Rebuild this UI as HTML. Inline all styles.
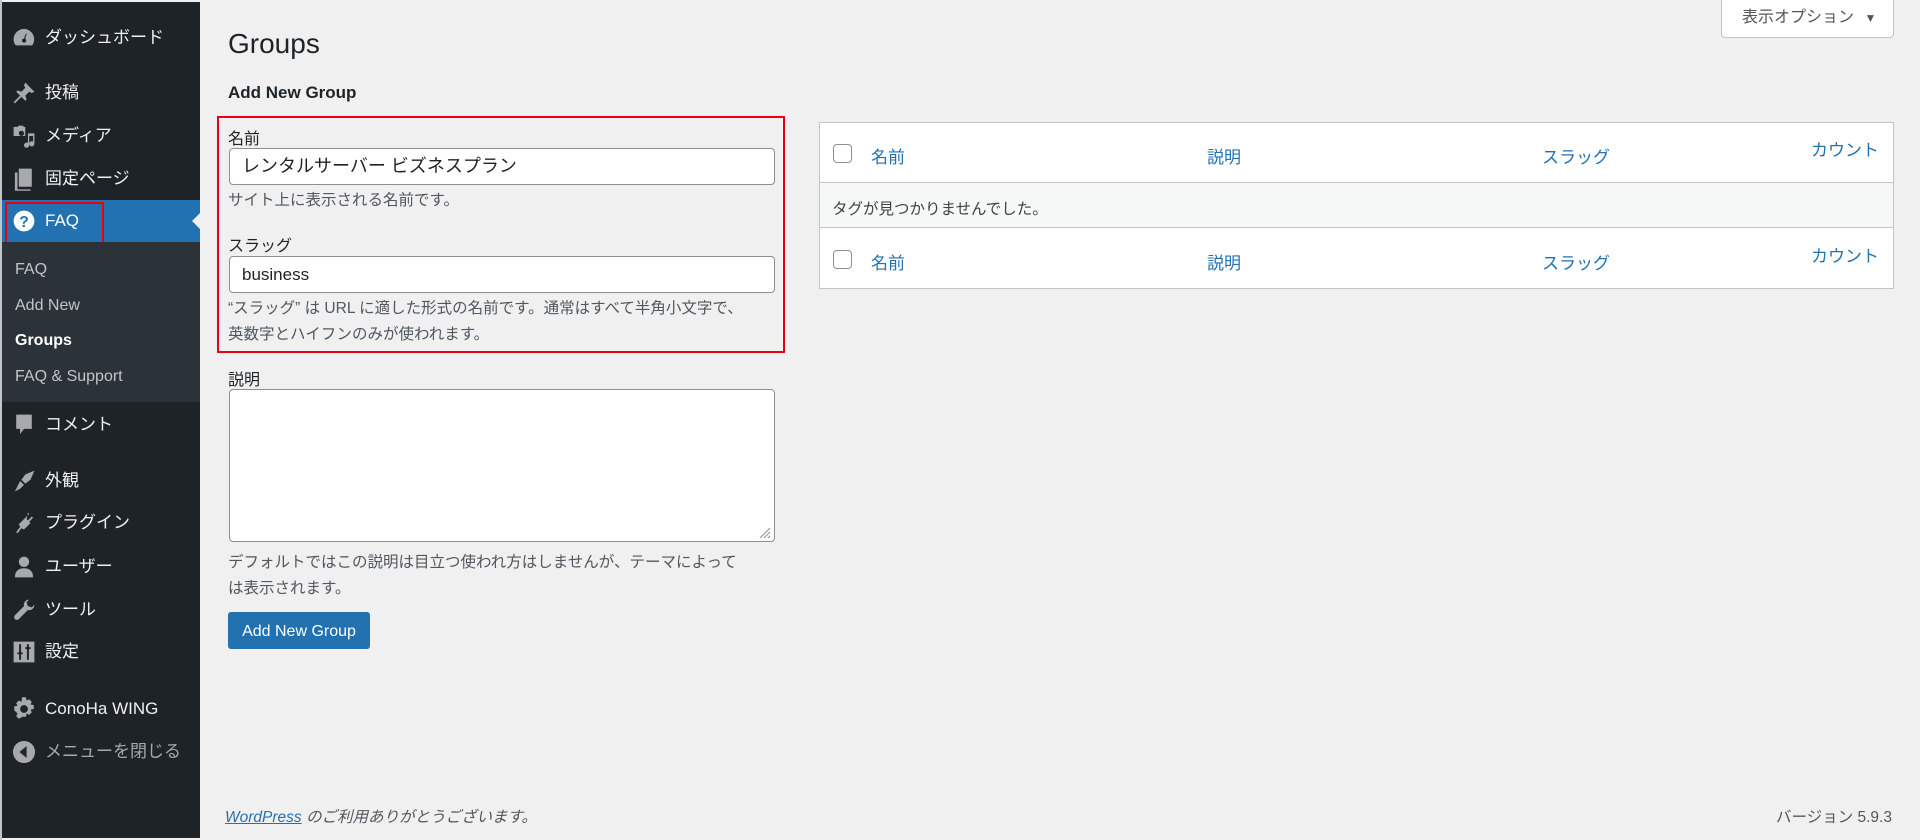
<!DOCTYPE html>
<html><head><meta charset="utf-8"><style>
*{margin:0;padding:0;box-sizing:border-box}
body{width:1920px;height:840px;background:#f0f0f1;font-family:"Liberation Sans","Noto Sans CJK JP",sans-serif;color:#1d2327;position:relative;overflow:hidden;font-size:16px}
.sb{position:absolute;left:2px;top:2px;width:198px;height:836px;background:#1d2327}
.mi{position:absolute;left:0;width:198px;height:40px;color:#f0f0f1;font-size:17px;line-height:42px;padding-left:43px}
.ic{position:absolute;left:9px;top:8px;width:26px;height:26px}
.sub{position:absolute;left:0;top:240px;width:198px;height:160px;background:#2c3338}
.sub div{position:absolute;left:13px;font-size:16px;color:#c3c4c7}
.a{position:absolute;color:#1d2327}
.lbl{position:absolute;left:228px;font-size:16px;color:#1d2327}
.hint{position:absolute;left:228px;font-size:15.5px;color:#50575e;line-height:26px}
.inp{position:absolute;left:229px;width:546px;background:#fff;border:1px solid #8c8f94;border-radius:4px;font-size:18px;padding-left:12px}
.blue{color:#2271b1}
.th{position:absolute;font-size:17px;color:#2271b1}
.cb{position:absolute;left:833px;width:19px;height:19px;border:1px solid #8c8f94;border-radius:4px;background:#fff}
</style></head><body>
<div style="position:absolute;left:0;top:0;width:2px;height:840px;background:#c3c4c7"></div>
<div class="sb">
 <div class="mi" style="top:15px"><svg class="ic" viewBox="0 0 20 20"><path fill="#a7aaad" d="M10 3a8 8 0 0 0-8 8c0 2 .6 3.5 1.7 4.7h12.6A8 8 0 0 0 10 3zm0 10.5a1.5 1.5 0 1 1 0-3l1.5-4 .6.2-1.2 4A1.5 1.5 0 0 1 10 13.5z"/></svg>ダッシュボード</div>
 <div class="mi" style="top:70px"><svg class="ic" viewBox="0 0 20 20"><path fill="#a7aaad" d="M11 2l7 7-2 1-2-1-3 3 1 3-1 1-3-3-5 5-1-1 5-5-3-3 1-1 3 1 3-3-1-2z"/></svg>投稿</div>
 <div class="mi" style="top:113px"><svg class="ic" viewBox="0 0 20 20"><path fill="#a7aaad" d="M2 3h3l1-1h3l1 1h1v7H2zM6 8a2 2 0 1 0 0-.1zM13 8h5v8a2 2 0 1 1-1-1.7V10h-3v7a2 2 0 1 1-1-1.7z"/></svg>メディア</div>
 <div class="mi" style="top:156px"><svg class="ic" viewBox="0 0 20 20"><path fill="#a7aaad" d="M6 2h10v14H6zM3 5h2v13h10v1H3z"/></svg>固定ページ</div>
 <div class="mi" style="top:198px;height:42px;background:#2271b1;color:#fff;line-height:42px"><svg class="ic" viewBox="0 0 20 20"><circle cx="10" cy="10" r="8" fill="#fff"/><text x="10" y="14.5" text-anchor="middle" font-size="12" font-weight="bold" fill="#2271b1" font-family="Liberation Sans">?</text></svg>FAQ
  <div style="position:absolute;right:0;top:13px;width:0;height:0;border-top:8px solid transparent;border-bottom:8px solid transparent;border-right:8px solid #f0f0f1"></div></div>
 <div style="position:absolute;left:3px;top:200px;width:99px;height:42px;border:2px solid #e60012"></div>
 <div class="sub">
  <div style="top:19px">FAQ</div>
  <div style="top:55px">Add New</div>
  <div style="top:90px;color:#fff;font-weight:bold">Groups</div>
  <div style="top:126px">FAQ &amp; Support</div>
 </div>
 <div class="mi" style="top:402px"><svg class="ic" viewBox="0 0 20 20"><path fill="#a7aaad" d="M4 2h12v11H10l-3 4v-4H4z"/></svg>コメント</div>
 <div class="mi" style="top:458px"><svg class="ic" viewBox="0 0 20 20"><path fill="#a7aaad" d="M18 2l-7 3-3 4 3 3 4-3zM7 10l3 3-3 3-4 2 2-4z"/></svg>外観</div>
 <div class="mi" style="top:500px"><svg class="ic" viewBox="0 0 20 20"><path fill="#a7aaad" d="M13 2l1 1-3 3 2 2 3-3 1 1-3 3 1 1-5 5-2-1-3 4-1-1 3-4-1-2 5-5 1 1z"/></svg>プラグイン</div>
 <div class="mi" style="top:544px"><svg class="ic" viewBox="0 0 20 20"><circle cx="10" cy="6" r="4" fill="#a7aaad"/><path fill="#a7aaad" d="M3 18c0-5 3-7 7-7s7 2 7 7z"/></svg>ユーザー</div>
 <div class="mi" style="top:587px"><svg class="ic" viewBox="0 0 20 20"><path fill="#a7aaad" d="M14 2a4 4 0 0 0-4 5L3 14a2 2 0 0 0 3 3l7-7a4 4 0 0 0 5-4l-2 2-3-1-1-3z"/></svg>ツール</div>
 <div class="mi" style="top:629px"><svg class="ic" viewBox="0 0 20 20"><rect x="2" y="2" width="16" height="16" fill="#a7aaad"/><path stroke="#1d2327" stroke-width="1.5" d="M7 4v12M13 4v12M5 11h4M11 7h4"/></svg>設定</div>
 <div class="mi" style="top:686px"><svg class="ic" viewBox="0 0 20 20"><path fill="#a7aaad" d="M8.5 1h3l.5 2.5 2-1 2 2-1 2 2.5.5v3l-2.5.5 1 2-2 2-2-1-.5 2.5h-3L8 16.5l-2 1-2-2 1-2L2.5 11V8L5 7.5l-1-2 2-2 2 1zM10 7a3 3 0 1 0 0 6 3 3 0 0 0 0-6z"/></svg>ConoHa WING</div>
 <div class="mi" style="top:729px;color:#a7aaad"><svg class="ic" viewBox="0 0 20 20"><circle cx="10" cy="10" r="8.5" fill="#a7aaad"/><path fill="#1d2327" d="M12 5.5v9L6.5 10z"/></svg>メニューを閉じる</div>
</div>

<div class="a" style="left:228px;top:28px;font-size:28px">Groups</div>
<div class="a" style="left:228px;top:83px;font-size:17px;font-weight:bold">Add New Group</div>
<div style="position:absolute;left:217px;top:116px;width:568px;height:237px;border:2px solid #e60012"></div>
<div class="lbl" style="top:125px">名前</div>
<div class="inp" style="top:148px;height:37px;line-height:35px">レンタルサーバー ビズネスプラン</div>
<div class="hint" style="top:188px">サイト上に表示される名前です。</div>
<div class="lbl" style="top:232px">スラッグ</div>
<div class="inp" style="top:256px;height:37px;line-height:35px;font-size:17px">business</div>
<div class="hint" style="top:296px">“スラッグ” は URL に適した形式の名前です。通常はすべて半角小文字で、<br>英数字とハイフンのみが使われます。</div>
<div class="lbl" style="top:366px">説明</div>
<div class="inp" style="top:389px;height:153px"></div>
<svg style="position:absolute;left:757px;top:525px" width="14" height="14"><path stroke="#8c8f94" d="M13 3L3 13M13 7L7 13M13 11l-2 2"/></svg>
<div class="hint" style="top:550px">デフォルトではこの説明は目立つ使われ方はしませんが、テーマによって<br>は表示されます。</div>
<div style="position:absolute;left:228px;top:612px;width:142px;height:37px;background:#2271b1;border-radius:3px;color:#fff;font-size:16px;line-height:39px;text-align:center">Add New Group</div>
<div class="a" style="left:225px;top:805px;font-size:15.5px;color:#50575e;font-style:italic"><span class="blue" style="text-decoration:underline">WordPress</span> のご利用ありがとうございます。</div>
<div class="a" style="left:1776px;top:805px;font-size:15.5px;color:#50575e">バージョン 5.9.3</div>

<div style="position:absolute;left:1721px;top:-1px;width:173px;height:39px;background:#fff;border:1px solid #c3c4c7;border-radius:0 0 4px 4px;font-size:16px;color:#50575e;line-height:36px;padding-left:20px">表示オプション <span style="font-size:12px;margin-left:6px">▼</span></div>

<div style="position:absolute;left:819px;top:122px;width:1075px;height:167px;background:#fff;border:1px solid #c3c4c7"></div>
<div style="position:absolute;left:820px;top:182px;width:1073px;height:46px;background:#f6f7f7;border-top:1px solid #c3c4c7;border-bottom:1px solid #c3c4c7"></div>
<div class="cb" style="top:144px"></div>
<div class="th" style="left:871px;top:143px">名前</div>
<div class="th" style="left:1207px;top:143px">説明</div>
<div class="th" style="left:1542px;top:143px">スラッグ</div>
<div class="th" style="left:1811px;top:136px">カウント</div>
<div class="a" style="left:832px;top:197px;font-size:15.5px;color:#3c434a">タグが見つかりませんでした。</div>
<div class="cb" style="top:250px"></div>
<div class="th" style="left:871px;top:249px">名前</div>
<div class="th" style="left:1207px;top:249px">説明</div>
<div class="th" style="left:1542px;top:249px">スラッグ</div>
<div class="th" style="left:1811px;top:242px">カウント</div>
</body></html>
